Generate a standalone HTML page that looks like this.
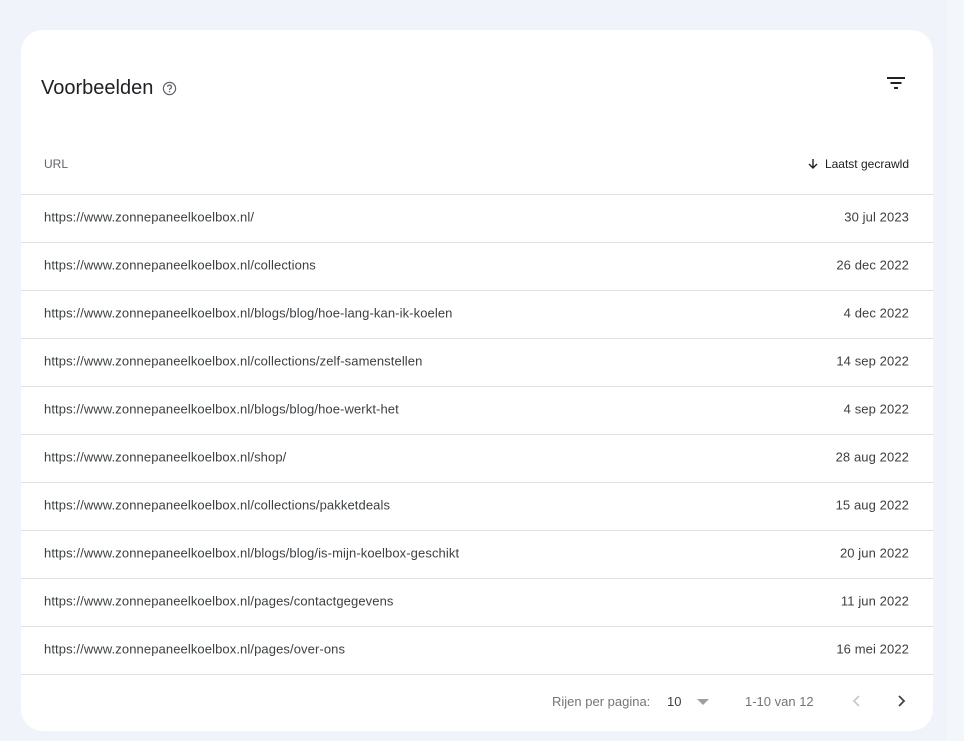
<!DOCTYPE html>
<html><head><meta charset="utf-8"><style>
body{margin:0;width:964px;height:741px;background:#f0f4fa;font-family:"Liberation Sans",sans-serif;position:relative;overflow:hidden}
.strip{position:absolute;left:947px;top:0;width:17px;height:741px;background:#f3f6fb}
.card{position:absolute;left:21px;top:30px;width:912px;height:701px;background:#fff;border-radius:22px;overflow:hidden}
.title{position:absolute;left:20px;top:47px;font-size:20px;color:#202124}
.help{position:absolute;left:141px;top:51px}
.filter{position:absolute;left:865px;top:45px}
.hdr{position:absolute;left:0;top:112px;width:912px;height:52px;border-bottom:1px solid #e0e0e0;font-size:12px}
.hdr .l,.hdr .r{top:calc(50% - 4px)}
.row{position:absolute;left:0;width:912px;height:47px;border-bottom:1px solid #e0e0e0;font-size:13px;color:#3c4043;letter-spacing:0.1px}
.l{position:absolute;left:23px;top:calc(50% - 2px);transform:translateY(-50%)}
.r{position:absolute;right:24px;top:calc(50% - 2px);transform:translateY(-50%)}
.foot{position:absolute;top:664px;font-size:13px;color:#757575}
</style></head><body>
<div class="strip"></div>
<div class="card">
<div class="title">Voorbeelden</div>
<svg class="help" width="15" height="15" viewBox="0 0 16 16"><circle cx="8" cy="8" r="6.5" fill="none" stroke="#5f6368" stroke-width="1.3"/><path d="M6 6.3a2 2 0 1 1 2.7 1.9c-.5.2-.7.6-.7 1.2" fill="none" stroke="#5f6368" stroke-width="1.3"/><circle cx="8" cy="11.3" r=".8" fill="#5f6368"/></svg>
<svg class="filter" width="20" height="16" viewBox="0 0 20 16"><rect x="1" y="2" width="18" height="2" fill="#202124"/><rect x="4.5" y="7" width="11" height="2" fill="#202124"/><rect x="8" y="12" width="4" height="2" fill="#202124"/></svg>
<div class="hdr"><span class="l" style="color:#5f6368">URL</span><span class="r" style="color:#202124"><svg width="12" height="12" viewBox="0 0 12 12" style="vertical-align:-2px;margin-right:6px"><path d="M6 1v9M2 6l4 4 4-4" fill="none" stroke="#202124" stroke-width="1.4"/></svg>Laatst gecrawld</span></div>
<div class="row" style="top:165px"><span class="l">https://www.zonnepaneelkoelbox.nl/</span><span class="r">30 jul 2023</span></div>
<div class="row" style="top:213px"><span class="l">https://www.zonnepaneelkoelbox.nl/collections</span><span class="r">26 dec 2022</span></div>
<div class="row" style="top:261px"><span class="l">https://www.zonnepaneelkoelbox.nl/blogs/blog/hoe-lang-kan-ik-koelen</span><span class="r">4 dec 2022</span></div>
<div class="row" style="top:309px"><span class="l">https://www.zonnepaneelkoelbox.nl/collections/zelf-samenstellen</span><span class="r">14 sep 2022</span></div>
<div class="row" style="top:357px"><span class="l">https://www.zonnepaneelkoelbox.nl/blogs/blog/hoe-werkt-het</span><span class="r">4 sep 2022</span></div>
<div class="row" style="top:405px"><span class="l">https://www.zonnepaneelkoelbox.nl/shop/</span><span class="r">28 aug 2022</span></div>
<div class="row" style="top:453px"><span class="l">https://www.zonnepaneelkoelbox.nl/collections/pakketdeals</span><span class="r">15 aug 2022</span></div>
<div class="row" style="top:501px"><span class="l">https://www.zonnepaneelkoelbox.nl/blogs/blog/is-mijn-koelbox-geschikt</span><span class="r">20 jun 2022</span></div>
<div class="row" style="top:549px"><span class="l">https://www.zonnepaneelkoelbox.nl/pages/contactgegevens</span><span class="r">11 jun 2022</span></div>
<div class="row" style="top:597px"><span class="l">https://www.zonnepaneelkoelbox.nl/pages/over-ons</span><span class="r">16 mei 2022</span></div>
<div class="foot" style="left:531px">Rijen per pagina:</div>
<div class="foot" style="left:646px;color:#3c4043">10</div>
<svg style="position:absolute;left:676px;top:669px" width="12" height="6" viewBox="0 0 12 6"><path d="M0 0h12L6 6z" fill="#9aa0a6"/></svg>
<div class="foot" style="left:724px">1-10 van 12</div>
<svg style="position:absolute;left:829px;top:664px" width="14" height="14" viewBox="0 0 14 14"><path d="M9 2L4 7l5 5" fill="none" stroke="#c4c7c5" stroke-width="1.6"/></svg>
<svg style="position:absolute;left:873px;top:664px" width="14" height="14" viewBox="0 0 14 14"><path d="M5 2l5 5-5 5" fill="none" stroke="#444" stroke-width="1.8"/></svg>
</div>
</body></html>
